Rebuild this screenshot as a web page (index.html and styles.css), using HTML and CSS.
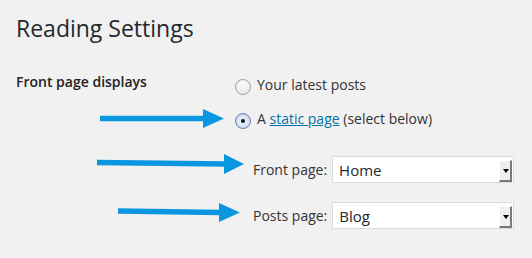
FILE: index.html
```html
<!DOCTYPE html>
<html lang="en">
<head>
  <meta charset="UTF-8">
  <title>Reading Settings</title>
  <link rel="stylesheet" href="styles.css">
</head>
<body>

  <div class="wrap">
    <h1>Reading Settings</h1>

    <!-- front page option -->
    <div class="form-row">
      <div class="row-label">Front page displays</div>
      <div class="row-field">
        <label class="choice">
          <span class="radio"></span>
          <span>Your latest posts</span>
        </label>
        <label class="choice">
          <span class="radio checked"></span>
          <span>A <a href="#">static page</a> (select below)</span>
        </label>

        <ul class="page-selects">
          <li>
            <span class="select-label">Front page:</span>
            <div class="select">
              <span class="select-value">Home</span>
              <span class="select-btn"></span>
            </div>
          </li>
          <li>
            <span class="select-label">Posts page:</span>
            <div class="select">
              <span class="select-value">Blog</span>
              <span class="select-btn"></span>
            </div>
          </li>
        </ul>
      </div>
    </div>

    <!-- annotation arrows -->
    <svg class="arrows" width="532" height="258" viewBox="0 0 532 258">
      <g fill="#0a97e0" stroke="#0a97e0">
        <line x1="100" y1="118.5" x2="205" y2="118.5" stroke-width="5.5" />
        <polygon points="203,109 224,118.5 203,128" stroke="none" />
        <line x1="97" y1="162.5" x2="226" y2="164" stroke-width="5.5" />
        <polygon points="224,154 244,164 224,174" stroke="none" />
        <line x1="118" y1="211" x2="221" y2="212.5" stroke-width="5.5" />
        <polygon points="219,203 240,212.5 219,222" stroke="none" />
      </g>
    </svg>
  </div>

</body>
</html>
```

FILE: styles.css
```css
html, body {
  margin: 0;
  background: #f1f1f1;
}
body {
  font-family: "Open Sans", sans-serif;
  font-size: 14px;
  line-height: 20px;
  color: #333;
}
.wrap {
  position: relative;
  width: 532px;
  height: 258px;
  padding-left: 16px;
  box-sizing: border-box;
  overflow: hidden;
}
h1 {
  margin: 14px 0 0;
  font-size: 23px;
  font-weight: 400;
  line-height: 29px;
  color: #23282d;
}
.form-row {
  display: flex;
  margin-top: 29px;
}
.row-label {
  width: 219px;
  font-weight: 600;
  color: #222;
}
.row-field {
  padding-top: 3px;
  display: flex;
  flex-direction: column;
  gap: 14px;
}
.choice {
  display: flex;
  align-items: center;
  gap: 6px;
  color: #333;
}
.choice a {
  color: #0073aa;
}
.radio {
  width: 14px;
  height: 14px;
  margin-top: 4px;
  border: 1px solid #a0a0a0;
  border-radius: 50%;
  background: linear-gradient(#fdfdfd, #e8e8e8);
  box-shadow: inset 0 1px 1px rgba(0, 0, 0, 0.08);
  display: flex;
  align-items: center;
  justify-content: center;
}
.radio.checked {
  border-color: #6f7fb8;
  background: radial-gradient(circle, #e2ecf8 40%, #b8c9e6 100%);
}
.radio.checked::after {
  content: "";
  width: 4px;
  height: 4px;
  border-radius: 50%;
  background: #111;
}
.page-selects {
  list-style: none;
  margin: 13px 0 0;
  padding: 0 0 0 18px;
  display: flex;
  flex-direction: column;
  gap: 19px;
}
.page-selects li {
  display: flex;
  align-items: center;
  gap: 5px;
}
.select-label {
  color: #333;
}
.select {
  width: 182px;
  height: 27px;
  box-sizing: border-box;
  border: 1px solid #dcdcdc;
  background: #fff;
  display: flex;
  align-items: center;
  justify-content: space-between;
}
.select-value {
  padding-left: 6px;
  font-size: 15px;
  color: #23282d;
}
.select-btn {
  align-self: flex-end;
  width: 13px;
  height: 22px;
  margin-right: 1px;
  box-sizing: border-box;
  background: #efefef;
  border-left: 1px solid #fff;
  border-top: 1px solid #fff;
  border-right: 2px solid #7a7a7a;
  border-bottom: 2px solid #7a7a7a;
  position: relative;
}
.select-btn::after {
  content: "";
  position: absolute;
  left: 3px;
  top: 8px;
  border-left: 3px solid transparent;
  border-right: 3px solid transparent;
  border-top: 4px solid #000;
}
.arrows {
  position: absolute;
  top: 0;
  left: 0;
  pointer-events: none;
}
```
